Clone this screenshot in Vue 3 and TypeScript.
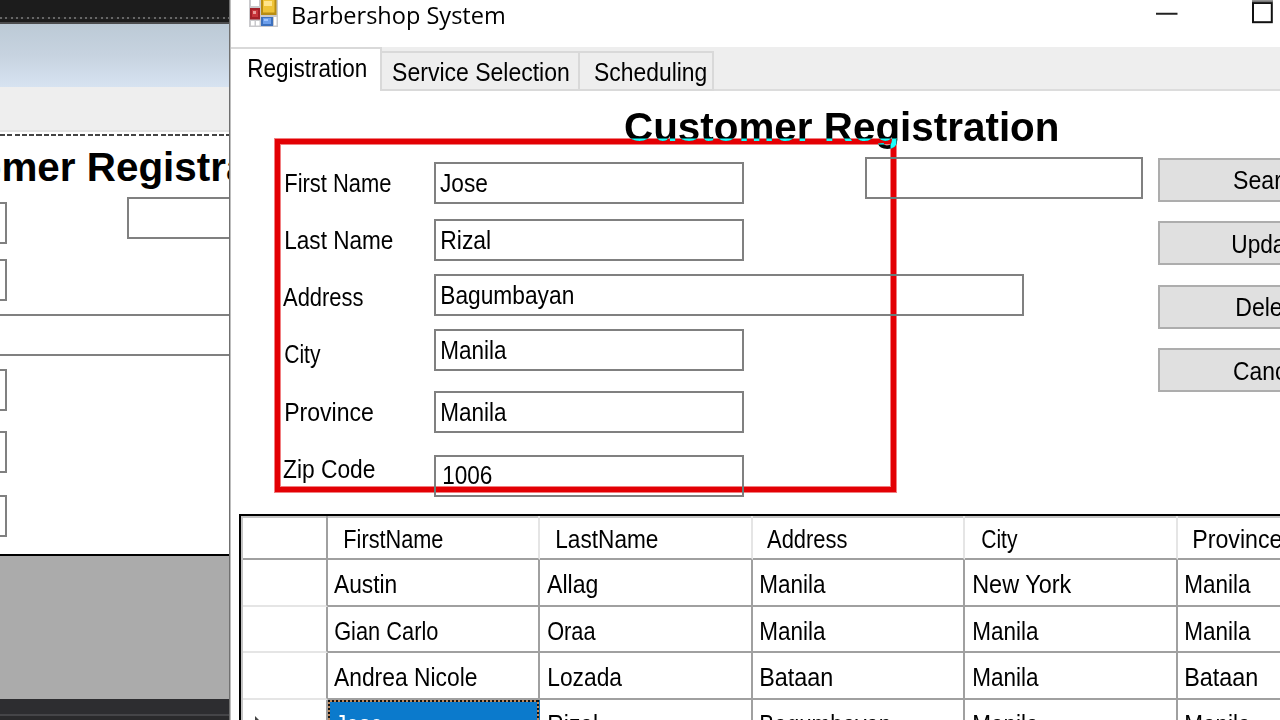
<script setup lang="ts">
interface Label {
  text: string
  width: number
  inset: number
}
interface Field {
  label: Label
  value: Label
  kind: string
}

const item = (text: string, width: number, inset = 0): Label => ({ text, width, inset })

const fields: Field[] = [
  { label: item('First Name', 105, 2.5), value: item('Jose', 47.5, 6), kind: 'first' },
  { label: item('Last Name', 107, 2.5), value: item('Rizal', 48.5, 8), kind: 'last' },
  { label: item('Address', 80.5, 0), value: item('Bagumbayan', 131, 8), kind: 'address' },
  { label: item('City', 35.5, 2), value: item('Manila', 65, 8), kind: 'city' },
  { label: item('Province', 87.5, 2.5), value: item('Manila', 65, 8), kind: 'province' },
  { label: item('Zip Code', 92, 0), value: item('1006', 49, 8.5), kind: 'zip' },
]

const tabs = [
  { ...item('Registration', 117, 18), kind: 'active' },
  { ...item('Service Selection', 175.5, 11), kind: 'service' },
  { ...item('Scheduling', 111, 15), kind: 'schedule' },
]

const buttons = [
  item('Search', 71, 73.5),
  item('Update', 71, 73),
  item('Delete', 64.5, 76.5),
  item('Cancel', 69.5, 73.5),
]

const columns = [
  item('FirstName', 98, 17),
  item('LastName', 101, 17),
  item('Address', 80.5, 14.5),
  item('City', 35.5, 16.5),
  item('Province', 88, 16.5),
]

const rows: Label[][] = [
  [item('Austin', 62, 6), item('Allag', 50, 6.5), item('Manila', 65, 8.5), item('New York', 98.5, 9), item('Manila', 65, 8.5)],
  [item('Gian Carlo', 103, 7), item('Oraa', 48, 8), item('Manila', 65, 8.5), item('Manila', 65, 8.5), item('Manila', 65, 8.5)],
  [item('Andrea Nicole', 143, 6), item('Lozada', 73.5, 8.5), item('Bataan', 71, 8.5), item('Manila', 65, 8.5), item('Bataan', 71, 8.5)],
  [item('Jose', 47.5, 7), item('Rizal', 48.5, 8.5), item('Bagumbayan', 129, 8.5), item('Manila', 65, 8.5), item('Manila', 65, 8.5)],
]

// Condenses a caption so that its glyphs span exactly the given width.
const vFit = {
  mounted(el: HTMLElement, binding: { value: number }) {
    const ctx = document.createElement('canvas').getContext('2d')
    if (!ctx) return
    const cs = getComputedStyle(el)
    ctx.font = `${cs.fontWeight} ${cs.fontSize} ${cs.fontFamily}`
    const m = ctx.measureText(el.textContent ?? '')
    const scale = binding.value / (m.actualBoundingBoxLeft + m.actualBoundingBoxRight)
    el.style.transform = `translateX(${m.actualBoundingBoxLeft * scale}px) scaleX(${scale})`
  },
}
</script>

<template>
  <main class="screen">
    <section class="designer">
      <div class="ide-strip"></div>
      <div class="glass"></div>
      <div class="tab-band"></div>
      <div class="dash"></div>
      <div class="canvas">
        <h2 class="heading back-heading"><span v-fit="432" class="t">Customer Registration</span></h2>
        <div class="back-body">
          <div class="inputs">
            <div v-for="f in fields" :key="f.kind" class="box" :class="f.kind"></div>
          </div>
          <div class="box search"></div>
        </div>
      </div>
      <div class="empty-grid"></div>
      <div class="ide-bottom"></div>
    </section>

    <section class="window">
      <header class="titlebar">
        <svg class="app-icon" width="30" height="28" viewBox="0 0 30 28">
          <rect x="0" y="-4" width="29" height="31" fill="#c9c9cc" />
          <path d="M2 -4h8v10h-8zM2 21h3.500v4.500h-3.500zM7 21h3.500v4.500h-3.500zM25 17h2.500v8.500h-2.500z" fill="#fff" />
          <rect x="1" y="8" width="10" height="11.500" fill="#a32028" />
          <rect x="3" y="10" width="6" height="7" fill="#c7353b" />
          <rect x="4" y="11" width="3" height="3" fill="#ea9b99" />
          <rect x="12" y="-4" width="15.500" height="19" fill="#b88d13" />
          <rect x="14" y="-2" width="11.500" height="14.500" fill="#efc338" />
          <rect x="15" y="1" width="8" height="5" fill="#ffe48b" />
          <rect x="12" y="17" width="12" height="9" fill="#3c70bd" />
          <rect x="14" y="18" width="8" height="6" fill="#6c9eeb" />
          <rect x="15" y="19" width="4" height="2" fill="#9fc5ff" />
        </svg>
        <span v-fit="211" class="t app-title">Barbershop System</span>
        <svg class="controls" width="126" height="30" viewBox="0 0 126 30">
          <path d="M2 13.750h21.500" stroke="#222" stroke-width="2" fill="none" />
          <rect x="99" y="3" width="18.800" height="19.200" stroke="#111" stroke-width="2" fill="#fff" />
          <path d="M98 1.200h21" stroke="#777" stroke-width="2" />
        </svg>
      </header>

      <nav class="tabs">
        <div v-for="t in tabs" :key="t.text" class="tab" :class="t.kind">
          <span v-fit="t.width" class="t" :style="{ marginLeft: t.inset + 'px' }">{{ t.text }}</span>
        </div>
      </nav>

      <div class="page">
        <h1 class="heading"><span v-fit="432" class="t">Customer Registration</span></h1>
        <div class="form">
          <div class="labels">
            <div v-for="f in fields" :key="f.kind" class="label">
              <span v-fit="f.label.width" class="t" :style="{ marginLeft: f.label.inset + 'px' }">{{ f.label.text }}</span>
            </div>
          </div>
          <div class="inputs">
            <div v-for="f in fields" :key="f.kind" class="box" :class="f.kind">
              <span v-fit="f.value.width" class="t" :style="{ marginLeft: f.value.inset - 2 + 'px' }">{{ f.value.text }}</span>
            </div>
          </div>
          <div class="box search"></div>
          <div class="buttons">
            <div v-for="b in buttons" :key="b.text" class="button">
              <span v-fit="b.width" class="t" :style="{ marginLeft: b.inset + 'px' }">{{ b.text }}</span>
            </div>
          </div>
        </div>

        <div class="grid">
          <div class="grid-row head">
            <div class="corner"></div>
            <div v-for="c in columns" :key="c.text" class="cell">
              <span v-fit="c.width" class="t" :style="{ marginLeft: c.inset + 'px' }">{{ c.text }}</span>
            </div>
          </div>
          <div v-for="(r, i) in rows" :key="i" class="grid-row">
            <div class="corner">
              <svg v-if="i === 3" class="pointer" width="12" height="20" viewBox="0 0 12 20">
                <path d="M1 0L10 9L1 18z" fill="#444" />
              </svg>
            </div>
            <div v-for="(c, j) in r" :key="j" class="cell" :class="{ selected: i === 3 && j === 0 }">
              <span v-fit="c.width" class="t" :style="{ marginLeft: c.inset + 'px' }">{{ c.text }}</span>
            </div>
          </div>
        </div>
      </div>
      <div class="marquee"></div>
    </section>
  </main>
</template>

<style>
body {
  margin: 0;
  overflow: hidden;
}
</style>

<style scoped>
.screen {
  position: relative;
  width: 1280px;
  height: 720px;
  overflow: hidden;
  background: #fff;
  color: #000;
  font-family: "Liberation Sans", Arial, sans-serif;
  font-size: 26px;
  line-height: 30px;
}
.screen * {
  box-sizing: border-box;
}
.t {
  display: inline-block;
  white-space: nowrap;
  transform-origin: 0 50%;
}
.designer {
  position: absolute;
  inset: 0 auto 0 0;
  width: 229px;
  height: 720px;
  overflow: hidden;
  display: flex;
  flex-direction: column;
}
.ide-strip {
  height: 24px;
  flex: none;
  padding-top: 17px;
  background: #1c1c1c;
  border-bottom: 2px solid #4c4c4e;
}
.ide-strip::before {
  content: "";
  display: block;
  height: 2px;
  background: repeating-linear-gradient(90deg, #666 0 2px, #222 2px 5.3px);
}
.glass {
  height: 63px;
  flex: none;
  background: linear-gradient(#bccad6, #c7d3e0 50%, #d7e3f1);
}
.tab-band {
  height: 45px;
  flex: none;
  background: #eee;
  border-bottom: 2px solid #e2e2e2;
}
.dash {
  height: 4px;
  flex: none;
  background: repeating-linear-gradient(90deg, #444 0 5px, #fff 5px 7.3px) 0 2px / 100% 2px no-repeat;
}
.canvas {
  height: 418px;
  flex: none;
  padding-top: 11px;
  overflow: hidden;
}
.heading {
  margin: 0;
  height: 40px;
  font-size: 40px;
  line-height: 40px;
  font-weight: 700;
}
.back-heading {
  margin-left: -112px;
}
.back-body {
  display: flex;
  margin: -1px 0 0 -303px;
}
.back-body .search {
  margin-left: -1px;
}
.empty-grid {
  height: 145px;
  flex: none;
  background: #ababab;
  border-top: 2px solid #000;
}
.ide-bottom {
  flex: 1;
  background: linear-gradient(#2d2d30 0 15px, #454548 15px 17px, #2a2a2c 17px);
}
.window {
  position: absolute;
  left: 229px;
  top: 0;
  width: 1051px;
  height: 720px;
  overflow: hidden;
  background: #fff;
  border-left: 1px solid #707070;
  box-shadow: inset 1px 0 #bdbdbd;
  isolation: isolate;
}
.titlebar {
  height: 47px;
  display: flex;
  align-items: flex-start;
  padding-left: 19px;
}
.app-icon {
  flex: none;
}
.app-title {
  flex: none;
  width: 240px;
  margin: 0 0 0 14px;
  font-family: "Open Sans", "Noto Sans", sans-serif;
  font-size: 23.5px;
}
.controls {
  margin-left: auto;
}
.tabs {
  height: 44px;
  margin-left: 1px;
  display: flex;
  align-items: flex-end;
  background: linear-gradient(#eee, #eee) 0 0 / 100% 42px no-repeat, #dcdcdc;
}
.tab {
  height: 40px;
  border: 2px solid #d9d9d9;
  border-left: 0;
  background: #eee;
  padding-top: 4px;
  flex: none;
}
.tab.active {
  width: 151px;
  height: 44px;
  background: #fff;
  border-bottom: 0;
}
.tab.service {
  width: 198px;
}
.tab.schedule {
  width: 134px;
}
.page > .heading {
  margin: 16px 0 0 395px;
}
.form {
  display: flex;
  align-items: flex-start;
  height: 368px;
  margin: -1px 0 0 53px;
}
.labels {
  width: 151px;
  padding-top: 21.600px;
  flex: none;
}
.label {
  height: 57.3px;
}
.inputs {
  width: 431px;
  flex: none;
}
.box {
  width: 310px;
  height: 42px;
  border: 2px solid #808080;
  padding-top: 4px;
  flex: none;
}
.box.first {
  margin-top: 16px;
}
.box.last {
  margin-top: 15px;
}
.box.address {
  width: 590px;
  margin-top: 13px;
}
.box.city {
  margin-top: 13px;
}
.box.province {
  margin-top: 20px;
}
.box.zip {
  margin-top: 22px;
  padding-top: 3px;
}
.box.search {
  width: 278px;
  margin-top: 11px;
}
.buttons {
  flex: none;
  width: 300px;
  margin-left: 15px;
  padding-top: 11.500px;
}
.button {
  height: 44px;
  margin-bottom: 19.600px;
  padding-top: 5.500px;
  background: #e0e0e0;
  border: 2px solid #adadad;
}
.grid {
  margin-left: 9px;
  width: 1300px;
  border: 2px solid #000;
  border-right: 0;
  box-shadow: inset 2px 2px #c4c4c4;
}
.grid-row {
  display: grid;
  grid-template-columns: 87px repeat(5, 212.400px);
  height: 46.700px;
}
.grid-row.head {
  height: 44px;
}
.corner {
  border-right: 2px solid #a0a0a0;
  border-bottom: 2px solid #e5e5e5;
  margin-left: 2px;
}
.cell {
  border-right: 2px solid #a0a0a0;
  border-bottom: 2px solid #a0a0a0;
  padding-top: 9px;
}
.head .corner {
  border-bottom-color: #a0a0a0;
}
.head .cell {
  border-right-color: #e5e5e5;
  padding-top: 8px;
}
.cell.selected {
  color: #fff;
  border: 0;
  background:
    repeating-linear-gradient(90deg, #111 0 2px, #c18a5c 2px 4px) 0 0 / 210px 2px no-repeat,
    repeating-linear-gradient(#111 0 2px, #c18a5c 2px 4px) 0 0 / 2px 100% no-repeat,
    repeating-linear-gradient(#111 0 2px, #c18a5c 2px 4px) 209px 0 / 2px 100% no-repeat,
    #0b7acc;
}
.pointer {
  display: block;
  margin: 16px 0 0 11px;
}
.marquee {
  position: absolute;
  left: 45px;
  top: 139px;
  width: 621px;
  height: 353px;
  border: 5px solid #1cfffb;
  box-shadow: 0 0 0 1px rgba(28, 255, 251, 0.5), inset 0 0 0 1px rgba(28, 255, 251, 0.5);
  mix-blend-mode: difference;
}
</style>
